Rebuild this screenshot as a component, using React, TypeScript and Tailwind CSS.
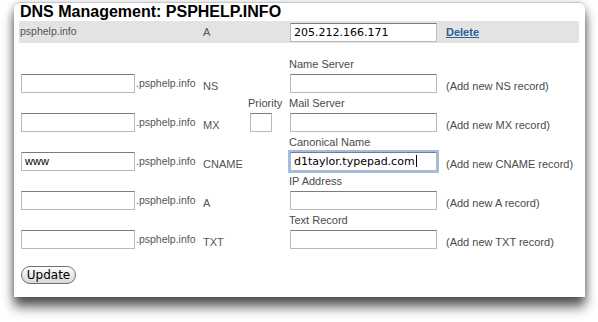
const records = [
  { type: "NS", label: "Name Server", host: "", value: "", note: "(Add new NS record)" },
  { type: "MX", label: "Mail Server", host: "", value: "", note: "(Add new MX record)", priority: true },
  { type: "CNAME", label: "Canonical Name", host: "www", value: "d1taylor.typepad.com", note: "(Add new CNAME record)", focused: true },
  { type: "A", label: "IP Address", host: "", value: "", note: "(Add new A record)" },
  { type: "TXT", label: "Text Record", host: "", value: "", note: "(Add new TXT record)" },
];

const field =
  "h-[19px] border border-[#b9b9b9] border-t-[#7c7c7c] bg-white px-[3px] text-[11px] leading-[17px] text-black outline-none";

function RecordBlock({ r }: { r: (typeof records)[number] }) {
  return (
    <div className="flex flex-col">
      {/* label line */}
      <div className="flex h-[19px] items-center text-[11px] text-[#4a4a4a]">
        <div className="w-[227px]" />
        <div className="w-[41px]">{r.priority ? "Priority" : ""}</div>
        <div>{r.label}</div>
      </div>
      {/* input line */}
      <div className="flex h-[20px] items-start">
        <div className="w-[115px]">
          <div className={`${field} w-[114px] font-['Liberation_Sans',Arial,sans-serif]`}>{r.host}</div>
        </div>
        <div className="flex h-[19px] w-[67px] items-center text-[10.5px] text-[#555]">.psphelp.info</div>
        <div className="flex h-[19px] w-[45px] items-center pt-[5px] text-[11px] text-[#555]">{r.type}</div>
        <div className="w-[41px] pl-[2px]">
          {r.priority && <div className={`${field} w-[22px]`} />}
        </div>
        <div className="w-[157px] pl-[1px]">
          {r.focused ? (
            <div
              className={`${field} w-[147px] border-[#6f95c9] font-['DejaVu_Sans',sans-serif] shadow-[0_0_0_2px_rgba(125,165,220,0.75)]`}
            >
              {r.value}
              <span className="ml-[1px] inline-block h-[12px] w-px translate-y-[2px] bg-black" />
            </div>
          ) : (
            <div className={`${field} w-[147px]`} />
          )}
        </div>
        <div className="flex h-[19px] items-center pt-[6px] text-[11px] text-[#4a4a4a]">{r.note}</div>
      </div>
    </div>
  );
}

export default function App() {
  return (
    <div className="h-[322px] w-[598px] overflow-hidden bg-white font-['Liberation_Sans',Arial,sans-serif]">
      <div className="ml-[14px] mt-[2px] h-[295px] w-[571px] rounded-t-[6px] border-t border-[#c8c8c8] bg-white shadow-[0_10px_12px_rgba(0,0,0,0.62),0_2px_9px_rgba(0,0,0,0.28)]">
        <h1 className="h-[18px] pl-[6px] text-[16px] font-bold leading-[18px] text-black">
          DNS Management: PSPHELP.INFO
        </h1>

        <div className="ml-[5px] flex h-[22px] w-[560px] items-center bg-[#e3e3e3] pl-[1px] text-[#555]">
          <div className="w-[183px] text-[10.5px]">psphelp.info</div>
          <div className="w-[87px] text-[11px]">A</div>
          <div className={`${field} w-[147px] font-['DejaVu_Sans',sans-serif]`}>205.212.166.171</div>
          <a href="#" className="ml-[9px] text-[11px] font-bold text-[#2f5c9b] underline">
            Delete
          </a>
        </div>

        <div className="mt-[12px] flex flex-col pl-[7px]">
          {records.map((r) => (
            <RecordBlock key={r.type} r={r} />
          ))}
        </div>

        <div className="mt-[12px] pl-[7px]">
          <button className="h-[18px] w-[55px] rounded-full border border-[#6f6f6f] bg-gradient-to-b from-white to-[#d8d8d8] font-['DejaVu_Sans',sans-serif] text-[12px] leading-[16px] text-black">
            Update
          </button>
        </div>
      </div>
    </div>
  );
}
